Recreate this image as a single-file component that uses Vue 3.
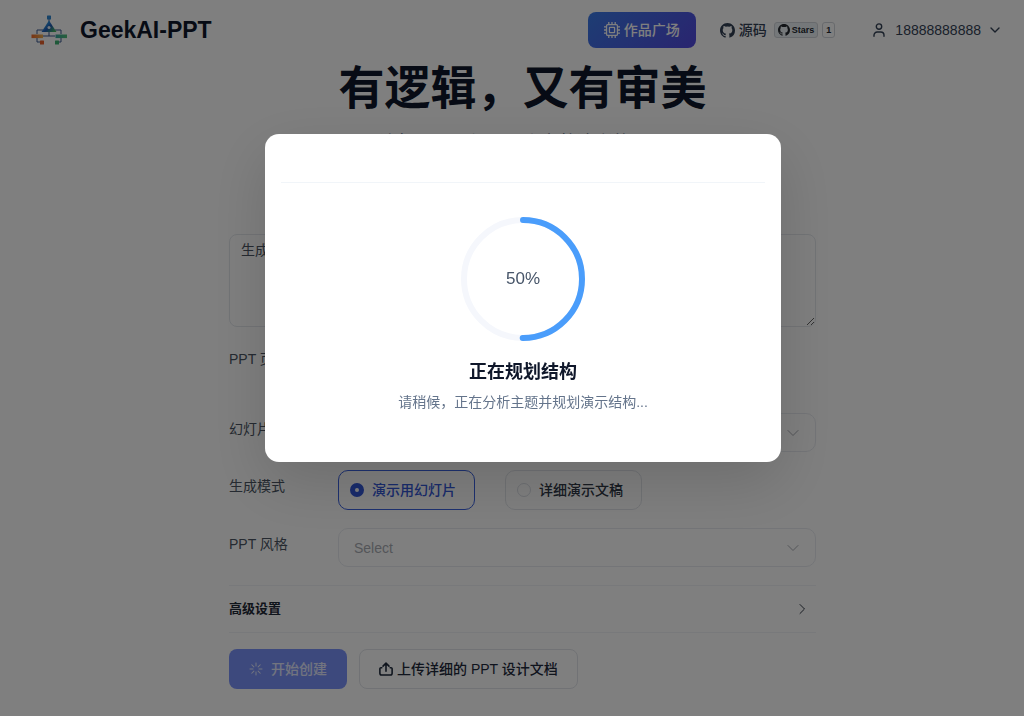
<script setup>
import { ref } from 'vue'

const topic = ref('生成一份演示文稿')
const mode = ref('slides')
const percent = 50
const radius = 59
const circumference = 2 * Math.PI * radius
const dash = `${(circumference * percent) / 100} ${circumference}`
const modes = [
  { value: 'slides', label: '演示用幻灯片' },
  { value: 'doc', label: '详细演示文稿' },
]
const chipPins = [6, 10, 14]
const spokes = [0, 45, 90, 135, 180, 225, 270, 315]
</script>

<template>
  <div class="page" lang="zh-CN">
    <header class="topbar">
      <a class="brand" href="#">
        <svg class="logo" viewBox="0 0 36 30" aria-hidden="true">
          <defs>
            <linearGradient id="tri" x1="0" y1="0.2" x2="1" y2="1">
              <stop offset="0.15" stop-color="#2fa0ea" />
              <stop offset="0.5" stop-color="#1f58b0" />
              <stop offset="0.9" stop-color="#48b860" />
            </linearGradient>
            <linearGradient id="barL"><stop offset="0" stop-color="#f0682a" /><stop offset="1" stop-color="#eeb050" /></linearGradient>
            <linearGradient id="barR"><stop offset="0" stop-color="#3aa7a0" /><stop offset="1" stop-color="#4fbf78" /></linearGradient>
          </defs>
          <g fill="none" stroke="#3c5a92" stroke-width="1">
            <path d="M18 4v3M18 17v4M12 21h12M12 15H6v4M24 15h6v4M6 23v4h3M30 23v4h-3" />
          </g>
          <rect x="16" y="0.5" width="4" height="4" rx="0.6" fill="#2f86d0" />
          <path d="M18 5.500 25.500 17h-15z" fill="url(#tri)" />
          <circle cx="18" cy="12.500" r="1.500" fill="#e8f1fb" />
          <rect x="0.500" y="19.500" width="11.500" height="3.600" fill="url(#barL)" />
          <rect x="24.500" y="19.500" width="11.500" height="3.600" fill="url(#barR)" />
          <rect x="9" y="25.500" width="4" height="4" rx="0.500" fill="#e8602c" />
          <rect x="24" y="25.500" width="4" height="4" rx="0.500" fill="#3eb272" />
        </svg>
        <span>GeekAI-PPT</span>
      </a>
      <nav class="nav">
        <button class="plaza" type="button">
          <svg viewBox="0 0 20 20" width="16" height="16" fill="none" stroke="currentColor" stroke-width="1.6" aria-hidden="true">
            <rect x="3.2" y="3.2" width="13.6" height="13.6" rx="1.5" />
            <rect x="6.8" y="6.8" width="6.4" height="6.4" rx="0.5" />
            <path v-for="p in chipPins" :key="p" :d="`M${p} 0v3M${p} 17v3M0 ${p}h3M17 ${p}h3`" />
          </svg>
          <span>作品广场</span>
        </button>
        <a class="source" href="#">
          <svg viewBox="0 0 16 16" width="15" height="15" fill="currentColor" aria-hidden="true">
            <path d="M8 0C3.58 0 0 3.58 0 8c0 3.54 2.29 6.53 5.47 7.59.4.07.55-.17.55-.38 0-.19-.01-.82-.01-1.49-2.01.37-2.53-.49-2.69-.94-.09-.23-.48-.94-.82-1.13-.28-.15-.68-.52-.01-.53.63-.01 1.08.58 1.23.82.72 1.21 1.87.87 2.33.66.07-.52.28-.87.51-1.07-1.78-.2-3.64-.89-3.64-3.95 0-.87.31-1.59.82-2.15-.08-.2-.36-1.02.08-2.12 0 0 .67-.21 2.2.82a7.6 7.6 0 0 1 4 0c1.53-1.04 2.2-.82 2.2-.82.44 1.1.16 1.92.08 2.12.51.56.82 1.27.82 2.15 0 3.07-1.87 3.75-3.65 3.95.29.25.54.73.54 1.48 0 1.07-.01 1.93-.01 2.2 0 .21.15.46.55.38A8 8 0 0 0 16 8c0-4.42-3.58-8-8-8z" />
          </svg>
          <span>源码</span>
          <span class="stars">
            <svg viewBox="0 0 16 16" width="12" height="12" fill="currentColor" aria-hidden="true">
              <path d="M8 0C3.58 0 0 3.58 0 8c0 3.54 2.29 6.53 5.47 7.59.4.07.55-.17.55-.38 0-.19-.01-.82-.01-1.49-2.01.37-2.53-.49-2.69-.94-.09-.23-.48-.94-.82-1.13-.28-.15-.68-.52-.01-.53.63-.01 1.08.58 1.23.82.72 1.21 1.87.87 2.33.66.07-.52.28-.87.51-1.07-1.78-.2-3.64-.89-3.64-3.95 0-.87.31-1.59.82-2.15-.08-.2-.36-1.02.08-2.12 0 0 .67-.21 2.2.82a7.6 7.6 0 0 1 4 0c1.53-1.04 2.2-.82 2.2-.82.44 1.1.16 1.92.08 2.12.51.56.82 1.27.82 2.15 0 3.07-1.87 3.75-3.65 3.95.29.25.54.73.54 1.48 0 1.07-.01 1.93-.01 2.2 0 .21.15.46.55.38A8 8 0 0 0 16 8c0-4.42-3.58-8-8-8z" />
            </svg>
            Stars
          </span>
          <span class="count">1</span>
        </a>
        <button class="user" type="button">
          <svg viewBox="0 0 16 16" width="16" height="16" fill="none" stroke="currentColor" stroke-width="1.4" stroke-linecap="round" aria-hidden="true">
            <circle cx="8" cy="4.600" r="2.700" />
            <path d="M3 14.300v-1.100a3.200 3.200 0 0 1 3.200-3.200h3.600a3.200 3.200 0 0 1 3.200 3.200v1.100" />
          </svg>
          <span>18888888888</span>
          <svg viewBox="0 0 12 12" width="12" height="12" fill="none" stroke="currentColor" stroke-width="1.4" stroke-linecap="round" stroke-linejoin="round" aria-hidden="true">
            <path d="M2 4 6 8 10 4" />
          </svg>
        </button>
      </nav>
    </header>

    <main class="main">
      <section class="hero">
        <h1>有逻辑，又有审美</h1>
        <p>让每一页，都是一张完整清晰的页面</p>
      </section>

      <form class="form" @submit.prevent>
        <textarea v-model="topic" aria-label="主题"></textarea>
        <div class="row tall">
          <span class="label">PPT 页数</span>
        </div>
        <div class="row">
          <label for="lang">幻灯片语言</label>
          <div class="select">
            <select id="lang"><option>Select</option></select>
            <svg viewBox="0 0 12 12" width="12" height="12" aria-hidden="true"><path d="M1 3.500 6 8.500 11 3.500" /></svg>
          </div>
        </div>
        <div class="row" role="radiogroup" aria-labelledby="mode-label">
          <span id="mode-label" class="label">生成模式</span>
          <div class="radios">
            <label v-for="m in modes" :key="m.value" class="radio" :class="{ active: mode === m.value }">
              <input v-model="mode" type="radio" name="mode" :value="m.value" />
              <span>{{ m.label }}</span>
            </label>
          </div>
        </div>
        <div class="row">
          <label for="style">PPT 风格</label>
          <div class="select">
            <select id="style"><option>Select</option></select>
            <svg viewBox="0 0 12 12" width="12" height="12" aria-hidden="true"><path d="M1 3.500 6 8.500 11 3.500" /></svg>
          </div>
        </div>
        <button class="advanced" type="button">
          <span>高级设置</span>
          <svg viewBox="0 0 12 12" width="12" height="12" aria-hidden="true"><path d="M4 1.500 8.500 6 4 10.500" /></svg>
        </button>
        <div class="actions">
          <button class="start" type="submit">
            <svg viewBox="0 0 14 14" width="14" height="14" stroke="currentColor" stroke-width="1" stroke-linecap="round" aria-hidden="true">
              <path v-for="a in spokes" :key="a" d="M7 1v3" :transform="`rotate(${a} 7 7)`" />
            </svg>
            <span>开始创建</span>
          </button>
          <button class="upload" type="button">
            <svg viewBox="0 0 16 16" width="14" height="14" fill="none" stroke="currentColor" stroke-width="1.800" stroke-linecap="round" stroke-linejoin="round" aria-hidden="true">
              <path d="M8 10.500V1.500M4.600 4.700 8 1.300l3.400 3.400M3.200 6.500H2.400A1.300 1.300 0 0 0 1 7.900v4.900a2 2 0 0 0 2 2h10a2 2 0 0 0 2-2V7.900a1.300 1.300 0 0 0-1.400-1.400h-.8" />
            </svg>
            <span>上传详细的 PPT 设计文档</span>
          </button>
        </div>
      </form>
    </main>

    <div class="overlay">
      <div class="dialog" role="dialog" aria-modal="true" aria-labelledby="dialog-title">
        <div class="dialog-head"></div>
        <div class="dialog-body">
          <div class="progress">
            <svg viewBox="0 0 126 126" width="126" height="126" fill="none" stroke-width="6" aria-hidden="true">
              <circle cx="63" cy="63" :r="radius" stroke="#f5f7fc" />
              <circle cx="63" cy="63" :r="radius" stroke="#4a9dfb" stroke-linecap="round" :stroke-dasharray="dash" transform="rotate(-90 63 63)" />
            </svg>
            <span class="percent">{{ percent }}%</span>
          </div>
          <h2 id="dialog-title">正在规划结构</h2>
          <p>请稍候，正在分析主题并规划演示结构...</p>
        </div>
      </div>
    </div>
  </div>
</template>

<style>
body {
  background: #fff;
}
</style>

<style scoped>
* {
  box-sizing: border-box;
}
.page {
  font-family: "Liberation Sans", "Noto Sans CJK SC", sans-serif;
  font-size: 14px;
  line-height: 20px;
  color: #1e293b;
}
button,
select,
textarea {
  font: inherit;
  color: inherit;
}
a {
  color: inherit;
  text-decoration: none;
}
svg {
  flex: none;
}
.topbar {
  height: 60px;
  padding: 0 23px 0 31px;
  display: flex;
  align-items: center;
  justify-content: space-between;
}
.brand {
  display: flex;
  align-items: center;
  gap: 13px;
  font-size: 23px;
  font-weight: 700;
  color: #0f172a;
}
.logo {
  width: 36px;
  height: 30px;
}
.nav {
  display: flex;
  align-items: center;
}
.plaza {
  display: flex;
  align-items: center;
  gap: 4px;
  height: 36px;
  padding: 0 16px;
  border: 0;
  border-radius: 8px;
  background: linear-gradient(135deg, #3b7be8, #5449e0);
  color: #fff;
  font-weight: 500;
}
.source {
  display: flex;
  align-items: center;
  margin-left: 24px;
  gap: 4px;
  color: #334155;
  font-weight: 500;
}
.stars,
.count {
  display: flex;
  align-items: center;
  gap: 2px;
  height: 16px;
  border: 1px solid #d1d5da;
  border-radius: 3px;
  font-size: 9px;
  font-weight: 700;
  color: #24292f;
}
.stars {
  margin-left: 3px;
  padding: 0 3px;
  background: #ebf0f4;
}
.count {
  padding: 0 3px;
  background: #fff;
}
.user {
  display: flex;
  align-items: center;
  gap: 8px;
  margin-left: 36px;
  padding: 0;
  border: 0;
  background: none;
  color: #334155;
}
.main {
  padding: 0 0 24px 21px;
}
.hero {
  text-align: center;
  height: 174px;
}
h1,
h2,
p {
  margin: 0;
}
h1 {
  font-size: 46px;
  line-height: 56px;
  font-weight: 700;
  color: #0f172a;
}
.hero p {
  margin-top: 13px;
  font-size: 18px;
  line-height: 28px;
  color: #64748b;
}
.form {
  max-width: 587px;
  margin: 0 auto;
}
textarea {
  display: block;
  width: 100%;
  height: 93px;
  margin-bottom: 16px;
  padding: 5px 11px;
  border: 1px solid #e5e8ed;
  border-radius: 8px;
  background: #fff;
  color: #4b5563;
  line-height: 21px;
  resize: vertical;
}
.row {
  display: grid;
  grid-template-columns: 109px 1fr;
  margin-bottom: 18px;
}
.row.tall {
  height: 52px;
}
.row > label,
.row > .label {
  line-height: 32px;
  color: #4b5563;
}
.select {
  display: flex;
  align-items: center;
  height: 39px;
  padding-right: 16px;
  border: 1px solid #e8ebf0;
  border-radius: 10px;
}
.select select {
  flex: 1;
  height: 100%;
  padding: 0 15px;
  border: 0;
  background: none;
  appearance: none;
  color: #a8abb2;
}
.select svg,
.advanced svg {
  fill: none;
  stroke: #a8abb2;
  stroke-linecap: round;
  stroke-linejoin: round;
}
.radios {
  display: flex;
  gap: 30px;
}
.radio {
  display: flex;
  align-items: center;
  gap: 8px;
  height: 40px;
  padding: 0 18px 0 11px;
  border: 1px solid #e2e5ea;
  border-radius: 10px;
  color: #303846;
  font-weight: 500;
}
.radio.active {
  border-color: #3b62e0;
  color: #3358d8;
}
.radio input {
  appearance: none;
  width: 14px;
  height: 14px;
  margin: 0;
  border: 1px solid #dcdfe6;
  border-radius: 50%;
}
.radio input:checked {
  border: 5px solid #3358d8;
}
.advanced {
  display: flex;
  align-items: center;
  justify-content: space-between;
  width: 100%;
  height: 48px;
  padding: 0 8px 0 0;
  border: 1px solid #f0f2f6;
  border-width: 1px 0;
  background: none;
  font-size: 13px;
  font-weight: 700;
  color: #1f2937;
}
.advanced svg {
  stroke: #303846;
}
.actions {
  display: flex;
  gap: 12px;
  margin-top: 16px;
}
.start,
.upload {
  display: flex;
  align-items: center;
  height: 40px;
  border-radius: 8px;
  font-weight: 500;
}
.start {
  gap: 8px;
  padding: 0 20px;
  border: 0;
  background: #7b93fa;
  color: #e4e9ff;
}
.upload {
  gap: 4px;
  padding: 0 19px;
  border: 1px solid #e2e5ea;
  background: none;
}
.overlay {
  position: fixed;
  inset: 0;
  padding-left: 22px;
  padding-top: 134px;
  background: rgba(0, 0, 0, 0.5);
}
.dialog {
  width: 516px;
  max-width: 90%;
  margin: 0 auto;
  padding: 16px;
  border-radius: 14px;
  background: #fff;
  box-shadow: 0 20px 60px rgba(0, 0, 0, 0.15);
}
.dialog-head {
  height: 33px;
  border-bottom: 1px solid #f1f5f9;
}
.dialog-body {
  display: flex;
  flex-direction: column;
  align-items: center;
  padding: 33px 0 34px;
}
.progress {
  display: grid;
  place-items: center;
}
.progress > * {
  grid-area: 1 / 1;
}
.percent {
  font-size: 17px;
  color: #475569;
}
h2 {
  margin-top: 16px;
  font-size: 18px;
  line-height: 28px;
  font-weight: 700;
  color: #0f172a;
}
.dialog-body p {
  margin-top: 6px;
  line-height: 20px;
  color: #64748b;
}
</style>
